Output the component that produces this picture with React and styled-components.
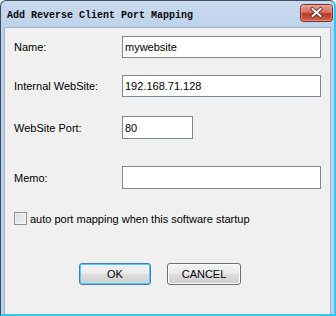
import styled, { createGlobalStyle } from 'styled-components';

const Global = createGlobalStyle`
  html, body {
    margin: 0;
    padding: 0;
    background: #ffffff;
  }
`;

const Window = styled.div`
  width: 336px;
  height: 316px;
  box-sizing: border-box;
  display: flex;
  flex-direction: column;
  background: linear-gradient(#c9daee, #bcd2ea 30px, #bcd2ea);
  border: 1px solid #3d4e60;
  border-right: 2px solid #37c6ee;
  border-bottom: 2px solid #37c6ee;
  border-radius: 6px 6px 0 0;
  font-family: Tahoma, 'Liberation Sans', 'DejaVu Sans', sans-serif;
  font-size: 11px;
  color: #000;
`;

const TitleBar = styled.div`
  height: 26px;
  flex: none;
  display: flex;
  align-items: center;
  justify-content: space-between;
  padding: 0 1px 0 6px;
`;

const Title = styled.span`
  font-family: 'Liberation Mono', 'DejaVu Sans Mono', monospace;
  font-size: 10px;
  font-weight: bold;
  color: #0a0a0a;
  margin-top: 2px;
`;

const CloseButton = styled.svg`
  display: block;
  margin-top: -3px;
`;

const Body = styled.div`
  flex: 1;
  margin: 0 3px;
  background: #f0f0f0;
  border: 1px solid #9fb3c8;
  border-bottom: none;
  padding: 7px 9px 0 9px;
`;

const Row = styled.div`
  display: flex;
  align-items: center;
  margin-top: ${(p) => p.$top}px;
`;

const Label = styled.span`
  width: 108px;
  flex: none;
`;

const Input = styled.div`
  width: ${(p) => p.$w}px;
  height: ${(p) => p.$h}px;
  box-sizing: border-box;
  border: 1px solid #828790;
  background: #ffffff;
  padding: 0 2px;
  display: flex;
  align-items: center;
  white-space: nowrap;
`;

const CheckRow = styled.label`
  display: flex;
  align-items: center;
  gap: 3px;
  margin-top: 23px;
`;

const Box = styled.span`
  width: 13px;
  height: 13px;
  box-sizing: border-box;
  border: 1px solid #8f8f8f;
  background: linear-gradient(135deg, #d9d9d9, #f5f5f5);
  box-shadow: inset 0 0 0 1px #f4f4f4;
`;

const Buttons = styled.div`
  display: flex;
  gap: 16px;
  padding-left: 65px;
  margin-top: 38px;
`;

const Button = styled.div`
  width: ${(p) => p.$w}px;
  height: 22px;
  box-sizing: border-box;
  border: 1px solid ${(p) => (p.$focus ? '#3c7fb1' : '#707070')};
  border-radius: 3px;
  background: linear-gradient(#f2f2f2, #ebebeb 50%, #dddddd 50%, #cfcfcf);
  box-shadow: inset 0 0 0 1px ${(p) => (p.$focus ? '#48d0f8' : '#fcfcfc')};
  display: flex;
  align-items: center;
  justify-content: center;
`;

export default function App() {
  return (
    <>
      <Global />
      <Window>
        <TitleBar>
          <Title>Add Reverse Client Port Mapping</Title>
          <CloseButton width="33" height="18" viewBox="0 0 33 18">
            <defs>
              <linearGradient id="closeRed" x1="0" y1="0" x2="0" y2="1">
                <stop offset="0" stopColor="#e8a797" />
                <stop offset="0.45" stopColor="#d4705e" />
                <stop offset="0.55" stopColor="#bd3622" />
                <stop offset="1" stopColor="#d06b58" />
              </linearGradient>
            </defs>
            <rect x="0.5" y="0.5" width="32" height="17" rx="3" fill="url(#closeRed)" stroke="#7a2e27" />
            <rect x="1.5" y="1.5" width="30" height="15" rx="2" fill="none" stroke="#f0b8aa" strokeOpacity="0.5" />
            <path d="M12.5 5 L20.5 12 M20.5 5 L12.5 12" stroke="#4e231e" strokeWidth="3.6" strokeLinecap="square" />
            <path d="M12.5 5 L20.5 12 M20.5 5 L12.5 12" stroke="#ffffff" strokeWidth="2" strokeLinecap="square" />
          </CloseButton>
        </TitleBar>
        <Body>
          <Row $top={1}>
            <Label>Name:</Label>
            <Input $w={200} $h={22}>mywebsite</Input>
          </Row>
          <Row $top={17}>
            <Label>Internal WebSite:</Label>
            <Input $w={200} $h={22}>192.168.71.128</Input>
          </Row>
          <Row $top={19}>
            <Label>WebSite Port:</Label>
            <Input $w={71} $h={23}>80</Input>
          </Row>
          <Row $top={27}>
            <Label>Memo:</Label>
            <Input $w={201} $h={23} />
          </Row>
          <CheckRow>
            <Box />
            <span>auto port mapping when this software startup</span>
          </CheckRow>
          <Buttons>
            <Button $w={72} $focus>OK</Button>
            <Button $w={74}>CANCEL</Button>
          </Buttons>
        </Body>
      </Window>
    </>
  );
}
